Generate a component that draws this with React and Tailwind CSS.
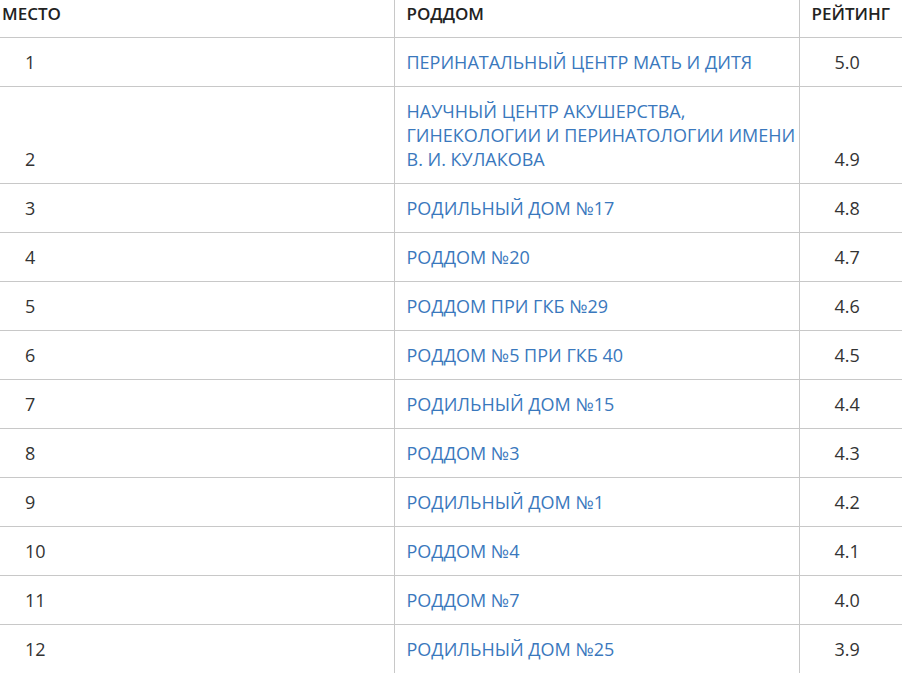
const rows = [
  ["1", ["ПЕРИНАТАЛЬНЫЙ ЦЕНТР МАТЬ И ДИТЯ"], "5.0"],
  ["2", ["НАУЧНЫЙ ЦЕНТР АКУШЕРСТВА,", "ГИНЕКОЛОГИИ И ПЕРИНАТОЛОГИИ ИМЕНИ", "В. И. КУЛАКОВА"], "4.9"],
  ["3", ["РОДИЛЬНЫЙ ДОМ №17"], "4.8"],
  ["4", ["РОДДОМ №20"], "4.7"],
  ["5", ["РОДДОМ ПРИ ГКБ №29"], "4.6"],
  ["6", ["РОДДОМ №5 ПРИ ГКБ 40"], "4.5"],
  ["7", ["РОДИЛЬНЫЙ ДОМ №15"], "4.4"],
  ["8", ["РОДДОМ №3"], "4.3"],
  ["9", ["РОДИЛЬНЫЙ ДОМ №1"], "4.2"],
  ["10", ["РОДДОМ №4"], "4.1"],
  ["11", ["РОДДОМ №7"], "4.0"],
  ["12", ["РОДИЛЬНЫЙ ДОМ №25"], "3.9"],
];

export default function App() {
  return (
    <div className="w-[902px] h-[690px] overflow-hidden bg-white font-['Open_Sans',sans-serif] text-[18px] leading-6 text-[#333]">
      <table className="table-fixed border-collapse w-[920px]">
        <colgroup>
          <col className="w-[394px]" />
          <col className="w-[405px]" />
          <col className="w-[121px]" />
        </colgroup>
        <thead>
          <tr className="border-b border-[#c8c8c8] text-[17px] text-[#222]">
            <th className="text-left font-semibold pl-[2px] pt-[2px] pb-[11px]">МЕСТО</th>
            <th className="text-left font-semibold pl-3 pt-[2px] pb-[11px] border-l border-[#c8c8c8]">РОДДОМ</th>
            <th className="text-left font-semibold pl-3 pt-[2px] pb-[11px] border-l border-[#c8c8c8]">РЕЙТИНГ</th>
          </tr>
        </thead>
        <tbody>
          {rows.map(([place, name, rate], i) => (
            <tr key={place} className={i < rows.length - 1 ? "border-b border-[#c8c8c8]" : ""}>
              <td className="align-bottom pl-[25px] py-3">{place}</td>
              <td className="align-bottom pl-3 py-3 border-l border-[#c8c8c8] text-[#3a78bd]">
                {name.map((l) => (
                  <div key={l}>{l}</div>
                ))}
              </td>
              <td className="align-bottom pl-[35px] py-3 border-l border-[#c8c8c8]">{rate}</td>
            </tr>
          ))}
        </tbody>
      </table>
    </div>
  );
}
